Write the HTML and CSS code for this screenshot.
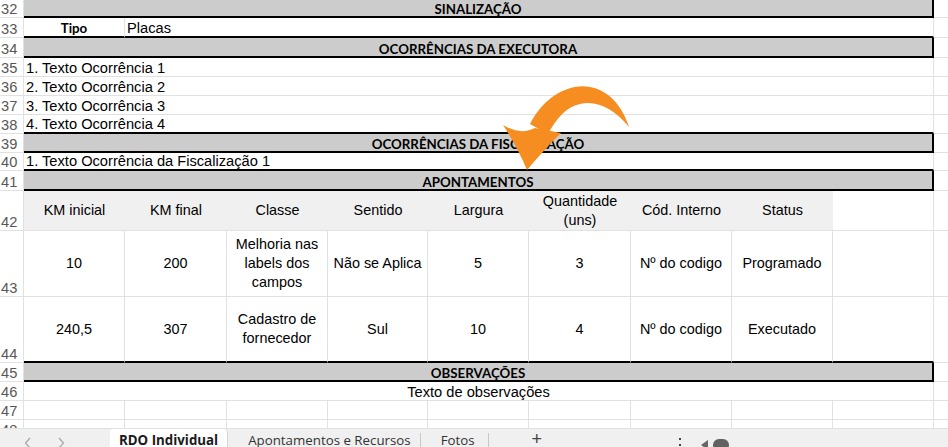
FILE: index.html
```html
<!DOCTYPE html>
<html lang="pt">
<head>
<meta charset="utf-8">
<title>RDO Individual</title>
<link rel="stylesheet" href="styles.css">
</head>
<body>
<div class="app">
  <div class="sheet">
    <!-- 32 -->
    <div class="cell rn">32</div>
    <div class="cell w9 sec">SINALIZAÇÃO</div>
    <div class="cell tail"></div>
    <!-- 33 -->
    <div class="cell rn">33</div>
    <div class="cell blk tipo">Tipo</div>
    <div class="cell w8 blk">Placas</div>
    <div class="cell tail"></div>
    <!-- 34 -->
    <div class="cell rn">34</div>
    <div class="cell w9 sec">OCORRÊNCIAS DA EXECUTORA</div>
    <div class="cell tail"></div>
    <!-- 35-38 -->
    <div class="cell rn">35</div>
    <div class="cell w9">1. Texto Ocorrência 1</div>
    <div class="cell tail"></div>
    <div class="cell rn">36</div>
    <div class="cell w9">2. Texto Ocorrência 2</div>
    <div class="cell tail"></div>
    <div class="cell rn">37</div>
    <div class="cell w9">3. Texto Ocorrência 3</div>
    <div class="cell tail"></div>
    <div class="cell rn">38</div>
    <div class="cell w9 blk">4. Texto Ocorrência 4</div>
    <div class="cell tail"></div>
    <!-- 39 -->
    <div class="cell rn">39</div>
    <div class="cell w9 sec">OCORRÊNCIAS DA FISCALIZAÇÃO</div>
    <div class="cell tail"></div>
    <!-- 40 -->
    <div class="cell rn">40</div>
    <div class="cell w9 blk">1. Texto Ocorrência da Fiscalização 1</div>
    <div class="cell tail"></div>
    <!-- 41 -->
    <div class="cell rn">41</div>
    <div class="cell w9 sec">APONTAMENTOS</div>
    <div class="cell tail"></div>
    <!-- 42 -->
    <div class="cell rn">42</div>
    <div class="cell hd">KM inicial</div>
    <div class="cell hd">KM final</div>
    <div class="cell hd">Classe</div>
    <div class="cell hd">Sentido</div>
    <div class="cell hd">Largura</div>
    <div class="cell hd">Quantidade (uns)</div>
    <div class="cell hd">Cód. Interno</div>
    <div class="cell hd">Status</div>
    <div class="cell"></div>
    <div class="cell tail"></div>
    <!-- 43 -->
    <div class="cell rn">43</div>
    <div class="cell dt">10</div>
    <div class="cell dt">200</div>
    <div class="cell dt">Melhoria nas labels dos campos</div>
    <div class="cell dt">Não se Aplica</div>
    <div class="cell dt">5</div>
    <div class="cell dt">3</div>
    <div class="cell dt">Nº do codigo</div>
    <div class="cell dt">Programado</div>
    <div class="cell dt"></div>
    <div class="cell tail"></div>
    <!-- 44 -->
    <div class="cell rn">44</div>
    <div class="cell dt blk">240,5</div>
    <div class="cell dt blk">307</div>
    <div class="cell dt blk">Cadastro de fornecedor</div>
    <div class="cell dt blk">Sul</div>
    <div class="cell dt blk">10</div>
    <div class="cell dt blk">4</div>
    <div class="cell dt blk">Nº do codigo</div>
    <div class="cell dt blk">Executado</div>
    <div class="cell dt blk"></div>
    <div class="cell tail"></div>
    <!-- 45 -->
    <div class="cell rn">45</div>
    <div class="cell w9 sec">OBSERVAÇÕES</div>
    <div class="cell tail"></div>
    <!-- 46 -->
    <div class="cell rn">46</div>
    <div class="cell w9 center">Texto de observações</div>
    <div class="cell tail"></div>
    <!-- 47 -->
    <div class="cell rn">47</div>
    <div class="cell"></div><div class="cell"></div><div class="cell"></div>
    <div class="cell"></div><div class="cell"></div><div class="cell"></div>
    <div class="cell"></div><div class="cell"></div><div class="cell"></div>
    <div class="cell tail"></div>
    <!-- 48 -->
    <div class="cell rn">48</div>
    <div class="cell"></div><div class="cell"></div><div class="cell"></div>
    <div class="cell"></div><div class="cell"></div><div class="cell"></div>
    <div class="cell"></div><div class="cell"></div><div class="cell"></div>
    <div class="cell tail"></div>
  </div>

  <svg class="arrow" width="948" height="447" viewBox="0 0 948 447" aria-hidden="true">
    <path d="M629,127 C619,96 597,83 575,87 C555,91 540,105 530,124 L548,134 C556,119 566,107 580,104 C598,100 615,110 629,127 Z" fill="#f58d21"/>
    <path d="M503,125 C515,132 525,133 535,128 L561,133 C548,146 537,158 527,170 C521,155 512,139 503,125 Z" fill="#f58d21"/>
  </svg>

  <div class="tabbar">
    <div class="nav">
      <svg class="chev" width="8" height="12" viewBox="0 0 8 12"><path d="M6,1 L1.5,6 L6,11" fill="none" stroke="#a6a6a6" stroke-width="1.2"/></svg>
      <svg class="chev" width="8" height="12" viewBox="0 0 8 12"><path d="M2,1 L6.5,6 L2,11" fill="none" stroke="#a6a6a6" stroke-width="1.2"/></svg>
    </div>
    <div class="tab active">RDO Individual</div>
    <div class="tab">Apontamentos e Recursos</div>
    <div class="sep"></div>
    <div class="tab fotos">Fotos</div>
    <div class="sep"></div>
    <div class="add">+</div>
    <div class="more"><span class="dot"></span><span class="dot"></span></div>
    <div class="scroll">
      <svg width="7" height="10" viewBox="0 0 7 10"><path d="M7,0 L0,5 L7,10 Z" fill="#666"/></svg>
      <span class="thumb"></span>
    </div>
  </div>
</div>
</body>
</html>
```

FILE: styles.css
```css
html, body {
  margin: 0;
  padding: 0;
  background: #ffffff;
}

body {
  width: 948px;
  height: 447px;
  overflow: hidden;
  font-family: "Liberation Sans", Arial, sans-serif;
}

.app {
  position: relative;
  width: 948px;
  height: 447px;
  overflow: hidden;
}

.sheet {
  display: grid;
  grid-template-columns: 24px 101px 102px 101px 100px 101px 102px 101px 101px 101px 1fr;
  grid-template-rows: 18px 20px 20px 19px 19px 19px 19px 19px 18px 20px 40px 66px 66px 19px 19px 19px 19px;
  height: 428px;
  overflow: hidden;
}

.cell {
  box-sizing: border-box;
  min-width: 0;
  display: flex;
  align-items: flex-end;
  padding: 0 2px;
  border-right: 1px solid #e1e1e1;
  border-bottom: 1px solid #e1e1e1;
  font-size: 14.67px;
  color: #000;
  white-space: nowrap;
  overflow: hidden;
}

.rn {
  padding: 0 0 0 1px;
  color: #575757;
  background: #fff;
}

.w9 { grid-column: span 9; }
.w8 { grid-column: span 8; }

.tail { border-right: none; }

.blk { border-bottom: 2px solid #000; }

.sec {
  background: #cccccc;
  border-bottom: 2px solid #000;
  border-right: 2px solid #000;
  justify-content: center;
  font-family: Lato, "Liberation Sans", sans-serif;
  font-weight: 700;
  font-size: 13.3px;
  line-height: 1;
}

.tipo {
  justify-content: center;
  font-family: Lato, "Liberation Sans", sans-serif;
  font-weight: 700;
  font-size: 13.3px;
}

.center { justify-content: center; }

.hd {
  background: #f0f0f0;
  border-right: none;
  justify-content: center;
  align-items: center;
  text-align: center;
  white-space: normal;
  font-size: 14.4px;
  line-height: 18.5px;
}

.dt {
  justify-content: center;
  align-items: center;
  text-align: center;
  white-space: normal;
  font-size: 14.4px;
  line-height: 18.7px;
}

.arrow {
  position: absolute;
  left: 0;
  top: 0;
  pointer-events: none;
}

.tabbar {
  box-sizing: border-box;
  display: flex;
  align-items: stretch;
  height: 19px;
  background: #f0f0f0;
  border-top: 1px solid #e1e1e1;
  font-family: "Open Sans", "Liberation Sans", sans-serif;
  font-size: 13.3px;
  color: #333;
  overflow: hidden;
}

.nav {
  width: 110px;
  display: flex;
  align-items: flex-start;
  gap: 25px;
  padding: 8px 0 0 24px;
  box-sizing: border-box;
}

.chev { display: block; }

.tab {
  padding: 2px 9px 0 20px;
  white-space: nowrap;
  line-height: 18px;
}

.tab.active {
  background: #ffffff;
  padding: 2px 9px 0 9px;
  font-weight: 700;
  color: #1a1a1a;
  border-top-left-radius: 4px;
  border-top-right-radius: 4px;
  border-right: 1px solid #d6d6d6;
}

.tab.fotos {
  padding: 2px 13px 0 20px;
}

.sep {
  width: 1px;
  margin-top: 4px;
  background: #c8c8c8;
}

.add {
  margin-left: 43px;
  padding-top: 1px;
  font-size: 18px;
  line-height: 18px;
  color: #444;
  font-family: "Liberation Sans", sans-serif;
  font-weight: 300;
}

.more {
  margin-left: 137px;
  display: flex;
  flex-direction: column;
  gap: 4px;
  padding-top: 9px;
}

.dot {
  display: block;
  width: 2px;
  height: 2px;
  background: #444;
}

.scroll {
  margin-left: 20px;
  display: flex;
  align-items: flex-start;
  gap: 5px;
  padding-top: 10px;
}

.scroll svg { display: block; margin-top: 1px; }

.thumb {
  display: block;
  width: 16px;
  height: 12px;
  border-radius: 6px;
  background: #616161;
}
```
